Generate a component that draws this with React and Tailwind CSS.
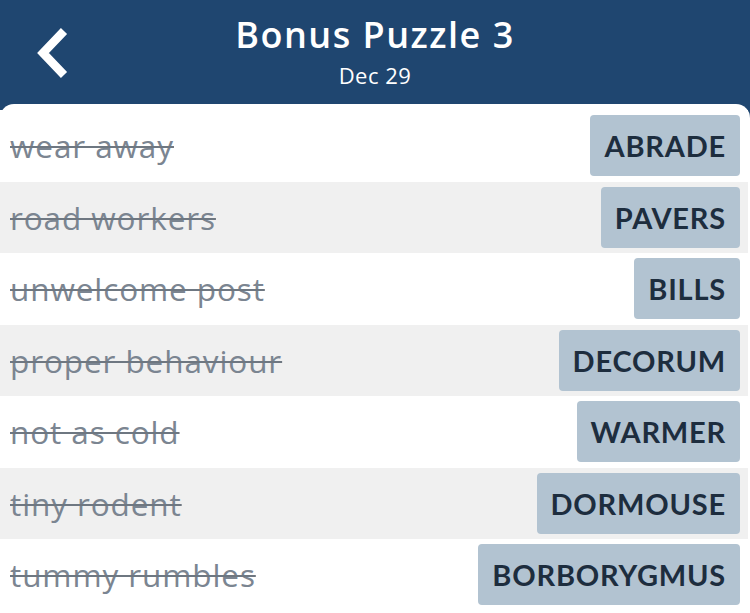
import React from "react";

const clues = [
  { clue: "wear away", answer: "ABRADE" },
  { clue: "road workers", answer: "PAVERS" },
  { clue: "unwelcome post", answer: "BILLS" },
  { clue: "proper behaviour", answer: "DECORUM" },
  { clue: "not as cold", answer: "WARMER" },
  { clue: "tiny rodent", answer: "DORMOUSE" },
  { clue: "tummy rumbles", answer: "BORBORYGMUS" },
];

const App = () => {
  return (
    <div className="w-[750px] h-[613px] overflow-hidden bg-[#1f4670] font-['Open_Sans','Liberation_Sans',sans-serif]">
      {/* Header */}
      <div className="relative h-[104px] flex flex-col items-center text-white">
        <button className="absolute left-[32px] top-[26px] w-[40px] h-[54px] flex items-center justify-center">
          <svg width="36" height="54" viewBox="0 0 36 54" fill="none">
            <path d="M30 5 L9 27 L30 49" stroke="white" strokeWidth="8.5" />
          </svg>
        </button>
        <div className="mt-[12px] text-[36px] leading-[46px] font-semibold tracking-[1.5px]">Bonus Puzzle 3</div>
        <div className="mt-[3px] text-[22px] leading-[28px] tracking-[0.5px]">Dec 29</div>
      </div>

      {/* Clue list */}
      <div className="h-[520px] bg-white rounded-t-[14px] pt-[6px]">
        {clues.map((item, i) => (
          <div
            key={item.answer}
            className={`w-[748px] h-[71.5px] flex items-center justify-between pl-[10px] pr-[8px] ${i % 2 === 1 ? "bg-[#f0f0f0]" : "bg-white"}`}
          >
            <span className="text-[31.5px] tracking-[0.9px] text-[#7b8591] line-through decoration-[#6e7781] decoration-2">
              {item.clue}
            </span>
            <span className="h-[61px] flex items-center px-[14px] rounded-[4px] bg-[#b2c3d1] text-[#1d2d3e] text-[29px] font-bold tracking-[0.8px] font-['Lato','Liberation_Sans',sans-serif]">
              {item.answer}
            </span>
          </div>
        ))}
      </div>
    </div>
  );
};

export default App;
